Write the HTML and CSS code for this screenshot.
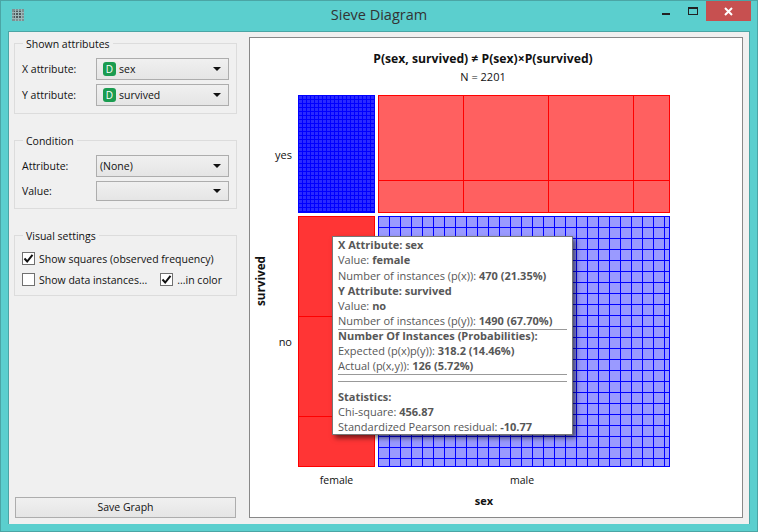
FILE: index.html
```html
<!DOCTYPE html>
<html lang="en">
<head>
  <meta charset="UTF-8" />
  <title>Sieve Diagram</title>
  <link rel="stylesheet" href="styles.css">
</head>
<body>
  <div class="window">
    <div class="titlebar">
      <svg class="app-icon" width="12" height="12" viewBox="0 0 12 12">
        <rect width="12" height="12" fill="#7d9092"/>
        <rect x="2" y="2" width="8" height="8" fill="#4d5a5c"/>
        <path d="M0 3.5H12M0 6.5H12M0 9.5H12M3.5 0V12M6.5 0V12M9.5 0V12" stroke="#9db8b9" stroke-width="1"/>
      </svg>
      <span class="title">Sieve Diagram</span>
      <div class="controls">
        <span class="min"></span>
        <span class="max"></span>
        <span class="close">
          <svg width="9" height="9" viewBox="0 0 9 9"><path d="M1 1L8 8M8 1L1 8" stroke="#fff" stroke-width="2"/></svg>
        </span>
      </div>
    </div>
    <div class="client">
      <aside class="sidebar">
        <fieldset class="group group-attrs">
          <legend>Shown attributes</legend>
          <div class="row">
            <label>X attribute:</label>
            <div class="combo"><span class="badge">D</span>sex<i class="arrow"></i></div>
          </div>
          <div class="row">
            <label>Y attribute:</label>
            <div class="combo"><span class="badge">D</span>survived<i class="arrow"></i></div>
          </div>
        </fieldset>
        <fieldset class="group group-cond">
          <legend>Condition</legend>
          <div class="row">
            <label>Attribute:</label>
            <div class="combo plain">(None)<i class="arrow"></i></div>
          </div>
          <div class="row row-short">
            <label>Value:</label>
            <div class="combo plain"><i class="arrow"></i></div>
          </div>
        </fieldset>
        <fieldset class="group group-visual">
          <legend>Visual settings</legend>
          <div class="check-row">
            <span class="check"><svg width="11" height="11" viewBox="0 0 11 11"><path d="M1.5 5.5L4.2 8.5L9.5 1.8" fill="none" stroke="#111" stroke-width="2"/></svg></span>
            Show squares (observed frequency)
          </div>
          <div class="check-row">
            <span class="check"></span>
            Show data instances...
            <span class="check second"><svg width="11" height="11" viewBox="0 0 11 11"><path d="M1.5 5.5L4.2 8.5L9.5 1.8" fill="none" stroke="#111" stroke-width="2"/></svg></span>
            ...in color
          </div>
        </fieldset>
        <button class="save">Save Graph</button>
      </aside>
      <main class="canvas">
        <div class="heading">P(sex, survived) ≠ P(sex)×P(survived)</div>
        <div class="count">N = 2201</div>
        <div class="sieve">
          <div class="y-title">survived</div>
          <div class="y-label row-yes">yes</div>
          <div class="cell blue-dark"></div>
          <div class="cell red-light"></div>
          <div class="y-label row-no">no</div>
          <div class="cell red-dark"></div>
          <div class="cell blue-light"></div>
          <div class="x-label col-female">female</div>
          <div class="x-label col-male">male</div>
          <div class="x-title">sex</div>
        </div>
        <div class="tooltip">
          <p><b>X Attribute: sex</b></p>
          <p>Value: <b>female</b></p>
          <p>Number of instances (p(x)): <b>470 (21.35%)</b></p>
          <p><b>Y Attribute: survived</b></p>
          <p>Value: <b>no</b></p>
          <p>Number of instances (p(y)): <b>1490 (67.70%)</b></p>
          <hr>
          <p class="probs"><b>Number Of Instances (Probabilities):</b></p>
          <p>Expected (p(x)p(y)): <b>318.2 (14.46%)</b></p>
          <p>Actual (p(x,y)): <b>126 (5.72%)</b></p>
          <hr class="double">
          <p class="stats"><b>Statistics:</b></p>
          <p>Chi-square: <b>456.87</b></p>
          <p>Standardized Pearson residual: <b>-10.77</b></p>
        </div>
      </main>
    </div>
  </div>
</body>
</html>
```

FILE: styles.css
```css
* {
  box-sizing: border-box;
}
html, body {
  margin: 0;
  height: 100%;
}
body {
  font-family: 'Open Sans', 'Liberation Sans', sans-serif;
  font-size: 10.5px;
  color: #111;
  overflow: hidden;
}
.window {
  width: 758px;
  height: 532px;
  background: #5bcfce;
  border: 1px solid #4ba5a5;
  display: flex;
  flex-direction: column;
  padding: 0 7px 7px;
}
.titlebar {
  height: 30px;
  flex: none;
  display: flex;
  align-items: flex-start;
  position: relative;
}
.app-icon {
  margin: 8px 0 0 4px;
}
.title {
  position: absolute;
  left: 0;
  right: 0;
  top: 4px;
  text-align: center;
  font-size: 14.5px;
  color: #333;
}
.controls {
  margin-left: auto;
  margin-right: -1px;
  display: flex;
  align-items: flex-start;
}
.min {
  width: 8px;
  height: 2px;
  background: #222;
  margin: 12px 18px 0 0;
}
.max {
  width: 10px;
  height: 8px;
  border: 1px solid #222;
  border-top-width: 2px;
  margin: 6px 8px 0 0;
}
.close {
  width: 45px;
  height: 20px;
  background: #c75050;
  display: flex;
  align-items: center;
  justify-content: center;
}
.client {
  flex: 1;
  min-height: 0;
  background: #f0f0f0;
  border: 1px solid #4ba5a5;
  border-width: 1px 1px 0 1px;
  display: flex;
  padding: 5px 6px 6px 5px;
  gap: 12px;
}

/* left panel */
.sidebar {
  width: 223px;
  flex: none;
  display: flex;
  flex-direction: column;
  margin-top: -1px;
}
.group {
  margin: 0;
  border: 1px solid #dcdcdc;
  padding: 8px 7px 0;
  min-width: 0;
}
.group legend {
  margin-left: 1px;
  padding: 2px 3px 0;
  line-height: 12px;
}
.group-attrs {
  height: 78px;
}
.group-cond {
  height: 76px;
  margin-top: 19px;
}
.group-visual {
  height: 68px;
  margin-top: 19px;
  padding-top: 6px;
}
.row {
  display: flex;
  align-items: center;
  height: 22px;
  margin-bottom: 4px;
}
.row-short {
  height: 20px;
}
.row label {
  width: 74px;
  flex: none;
}
.combo {
  flex: 1;
  height: 100%;
  border: 1px solid #adadad;
  background: linear-gradient(#f0f0f0, #e5e5e5);
  display: flex;
  align-items: center;
  padding-left: 6px;
  position: relative;
}
.combo.plain {
  padding-left: 3px;
}
.badge {
  width: 13px;
  height: 14px;
  border-radius: 3px;
  background: #1a9c50;
  color: #fff;
  font-size: 10px;
  line-height: 14px;
  text-align: center;
  margin-right: 3px;
}
.arrow {
  position: absolute;
  right: 7px;
  top: 50%;
  margin-top: -2px;
  border: 4px solid transparent;
  border-top: 4px solid #111;
  border-bottom: 0;
}
.check-row {
  display: flex;
  align-items: center;
  height: 21px;
}
.check {
  width: 13px;
  height: 13px;
  border: 1px solid #707070;
  background: #fff;
  margin-right: 4px;
  flex: none;
  display: flex;
  align-items: center;
  justify-content: center;
}
.check.second {
  margin-left: 13px;
}
.save {
  margin-top: auto;
  margin-left: 1px;
  width: 221px;
  height: 21px;
  border: 1px solid #adadad;
  background: linear-gradient(#f0f0f0, #e5e5e5);
  font: inherit;
  color: #111;
  padding: 0 0 2px;
}

/* graph area */
.canvas {
  flex: 1;
  background: #fff;
  border: 1px solid #888;
  position: relative;
  display: flex;
  flex-direction: column;
  align-items: center;
  padding: 13px 26px 0 0;
  font-size: 11px;
}
.heading {
  font-size: 12.2px;
  font-weight: 700;
  line-height: 15px;
}
.count {
  line-height: 15px;
  margin-top: 3px;
}
.sieve {
  display: grid;
  grid-template-columns: 45px 77px 292px;
  grid-template-rows: 118px 251px 21px 15px;
  gap: 3px;
  margin-top: 11px;
  align-self: flex-start;
}
.y-title {
  grid-row: 1 / 3;
  grid-column: 1;
  align-self: center;
  justify-self: start;
  margin-left: 2px;
  writing-mode: vertical-rl;
  transform: rotate(180deg);
  font-size: 11.7px;
  font-weight: 700;
}
.y-label {
  grid-column: 1;
  align-self: center;
  text-align: right;
  padding-right: 3px;
}
.row-yes {
  grid-row: 1;
}
.row-no {
  grid-row: 2;
}
.x-label {
  grid-row: 3;
  text-align: center;
  padding-top: 3px;
  font-size: 10.5px;
  line-height: 15px;
}
.col-female {
  grid-column: 2;
}
.col-male {
  grid-column: 3;
  padding-right: 4px;
}
.x-title {
  grid-column: 2 / 4;
  grid-row: 4;
  text-align: center;
  font-weight: 700;
  line-height: 14px;
}
.cell {
  border: 1px solid;
  background-origin: border-box;
}
.blue-dark {
  border-color: #0000ff;
  background-color: #2a2aff;
  background-image: linear-gradient(#0000ff 1px, transparent 1px), linear-gradient(90deg, #0000ff 1px, transparent 1px);
  background-size: 4px 4px;
}
.red-light {
  border-color: #ff0000;
  background-color: #ff6060;
  background-image: linear-gradient(#ff0000 1px, transparent 1px), linear-gradient(90deg, #ff0000 1px, transparent 1px);
  background-size: 85px 85px;
}
.red-dark {
  border-color: #ff0000;
  background-color: #ff3535;
  background-image: linear-gradient(#ff0000 1px, transparent 1px);
  background-size: 100px 100px;
}
.blue-light {
  border-color: #0000ff;
  background-color: #9a9aff;
  background-image: linear-gradient(#0000ff 1px, transparent 1px), linear-gradient(90deg, #0000ff 1px, transparent 1px);
  background-size: 11px 11px;
}
.tooltip {
  position: absolute;
  left: 82px;
  top: 198px;
  width: 241px;
  height: 199px;
  background: #fff;
  border: 1px solid #767676;
  box-shadow: 3px 3px 5px rgba(0, 0, 0, 0.55);
  padding: 0 5px;
  color: #575757;
  line-height: 15.3px;
}
.tooltip p {
  margin: 0;
  white-space: nowrap;
}
.tooltip hr {
  margin: 0;
  border: 0;
  border-top: 1px solid #999;
}
.tooltip hr.double {
  height: 8px;
  border-bottom: 1px solid #999;
}
.tooltip .probs {
  margin-top: -2px;
}
.tooltip .stats {
  margin-top: 7px;
}
```
